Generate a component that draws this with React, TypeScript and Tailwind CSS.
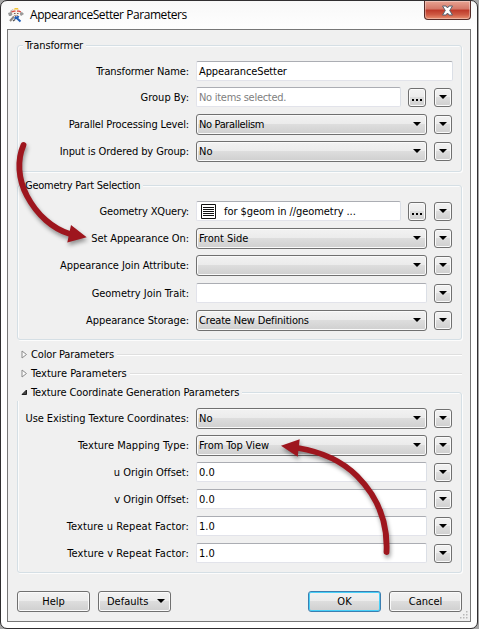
import { ReactNode } from "react";

const BEVEL =
  "border border-[#707070] rounded-[3px] bg-[linear-gradient(180deg,#f2f2f2_0%,#ebebeb_49%,#dddddd_50%,#cfcfcf_100%)] shadow-[inset_0_0_0_1px_#fafafa]";

function Arrow({ className = "" }: { className?: string }) {
  return (
    <svg width="8" height="4" viewBox="0 0 8 4" className={"block shrink-0 " + className}>
      <path d="M0 0H8L4 4Z" fill="#000" />
    </svg>
  );
}

function MenuButton() {
  return (
    <div className={"mt-px flex h-[19px] w-[18px] shrink-0 items-center justify-center " + BEVEL}>
      <Arrow className="-mt-px" />
    </div>
  );
}

type RowProps = {
  label: string;
  track: string;
  h: string;
  kind: "text" | "combo" | "picker" | "wide";
  children?: ReactNode;
};

function Row({ label, track, h, kind, children }: RowProps) {
  const width = kind === "wide" ? "w-[257px]" : kind === "picker" ? "w-[205px]" : "w-[231px]";
  const look =
    kind === "combo"
      ? "h-[21px] pr-[5px] " + BEVEL
      : "h-5 rounded-[2px] border border-[#e2e3ea] border-t-[#abadb3] border-r-[#dbdfe6] bg-white pt-[2px]";
  return (
    <div className={"flex items-start " + h}>
      <div className={"flex h-[21px] w-[171px] shrink-0 items-center justify-end " + track}>{label}</div>
      <div className={"ml-[7px] flex shrink-0 items-center justify-between pl-[2px] " + width + " " + look}>
        <div className="flex items-center">{children}</div>
        {kind === "combo" && <Arrow className="-mt-px" />}
      </div>
      {kind === "picker" && (
        <div className={"mt-px ml-[7px] flex h-[19px] w-[18px] shrink-0 items-end justify-center gap-[2px] pb-[5px] " + BEVEL}>
          <i className="size-[2px] bg-black" />
          <i className="size-[2px] bg-black" />
          <i className="size-[2px] bg-black" />
        </div>
      )}
      {kind !== "wide" && (
        <div className={kind === "picker" ? "ml-[8px]" : "ml-[7px]"}>
          <MenuButton />
        </div>
      )}
    </div>
  );
}

const GROUP =
  "rounded-[3px] border border-[#d5dfe5] shadow-[inset_1px_1px_0_#fcfcfc,1px_1px_0_#fcfcfc]";

function Group({ title, track, className, children }: { title: string; track: string; className: string; children: ReactNode }) {
  return (
    <section className={GROUP + " " + className}>
      <div className="-mt-[8px] ml-[5px] flex h-4 w-fit items-center bg-[#f0f0f0] pr-[3px] pl-[2px]">
        <span className={track}>{title}</span>
      </div>
      {children}
    </section>
  );
}

function Collapsed({ title, track }: { title: string; track: string }) {
  return (
    <div className="flex h-[19px] items-center pl-[4px]">
      <svg width="7" height="9" viewBox="0 0 7 9" className="mr-[3px] block shrink-0">
        <path d="M1 1L5.5 4.5L1 8Z" fill="#fbfbfb" stroke="#8b8b8b" />
      </svg>
      <span className={track}>{title}</span>
      <div className="ml-[3px] h-[2px] flex-1 border-b border-white bg-[#dfdfdf]" />
    </div>
  );
}

function FmeIcon() {
  return (
    <svg width="16" height="15" viewBox="0 0 16 15" className="block">
      <path d="M2 3L5 1V4L3 5Z" fill="#b9b4b0" />
      <path d="M0 5L3 4L5 6L3 8H1ZM11 5L14 4L16 6L13 8Z" fill="#9a9a9a" />
      <path d="M4 3L6 0H10L12 3V6L10 8H6L4 6Z" fill="#f6eee6" />
      <path d="M5.500 1.500L7 0H10L10.500 1.500Z" fill="#f2c534" />
      <path d="M3.500 4L6 3.200H7.500M9 3.200H11L13 4" fill="none" stroke="#d8433a" strokeWidth="1.2" />
      <path d="M6 5.500H7.500M9 5.500H10.500" stroke="#6b6260" strokeWidth="1" />
      <path d="M6 7.500H10" stroke="#c9a58c" strokeWidth="1" />
      <path d="M2 13L6 8.500" stroke="#8d8782" strokeWidth="2" />
      <path d="M7 8.500L12.500 13.500M8 9L7 11M10.500 8L9 10.500" fill="none" stroke="#245fb5" strokeWidth="2" />
      <path d="M5 13L7 11.500" stroke="#555" strokeWidth="1.5" />
    </svg>
  );
}

export default function App() {
  return (
    <div className="relative h-[629px] w-[479px] overflow-hidden bg-[#a5a5a5] font-['DejaVu_Sans_Condensed','DejaVu_Sans',sans-serif] text-[11px] leading-[14px] whitespace-nowrap text-black [font-stretch:condensed]">
      <div className="flex h-[629px] w-[478px] flex-col rounded-[7px] border border-[#302e30] bg-[linear-gradient(180deg,#f8f8f8,#ffffff_5%,#ffffff)] pr-[6px] pb-[6px] pl-[6px]">
        <header className="flex h-[28px] shrink-0 items-start justify-between">
          <div className="flex items-center gap-[6px] pt-[5px] pl-px">
            <FmeIcon />
            <h1 className="font-['Open_Sans',sans-serif] text-[12px] leading-[18px] tracking-[-0.44px] [font-stretch:normal]">AppearanceSetter Parameters</h1>
          </div>
          <div className="flex h-[19px] w-[47px] items-center justify-center rounded-b-[4px] border border-t-0 border-[#552b27] bg-[linear-gradient(180deg,#e8a493_0%,#d47767_45%,#bd3828_50%,#ce5943_75%,#e99071_100%)] shadow-[inset_0_0_0_1px_#ffffff55]">
            <svg width="13" height="11" viewBox="0 0 13 11">
              <path d="M1.500 1H5L6.500 3L8 1H11.500L8.700 5.500L11.500 10H8L6.500 8L5 10H1.500L4.300 5.500Z" fill="#fff" stroke="#56616f" />
            </svg>
          </div>
        </header>

        <main className="flex min-h-0 flex-1 flex-col border border-[#777] bg-[#f0f0f0] pt-[15px] pr-[8px] pl-[9px]">
          <Group title="Transformer" track="tracking-[-0.1px]" className="h-[127px]">
            <div className="pt-[7px]">
              <Row label="Transformer Name:" track="tracking-[-0.12px]" h="h-[26px]" kind="wide"><span className="tracking-[-0.12px]">AppearanceSetter</span></Row>
              <Row label="Group By:" track="" h="h-[27px]" kind="picker"><span className="tracking-[-0.28px] text-[#808080]">No items selected.</span></Row>
              <Row label="Parallel Processing Level:" track="tracking-[-0.16px]" h="h-[27px]" kind="combo"><span className="tracking-[-0.36px]">No Parallelism</span></Row>
              <Row label="Input is Ordered by Group:" track="tracking-[-0.1px]" h="h-[27px]" kind="combo">No</Row>
            </div>
          </Group>

          <Group title="Geometry Part Selection" track="tracking-[-0.24px]" className="mt-[13px] h-[155px]">
            <div className="pt-[7px]">
              <Row label="Geometry XQuery:" track="tracking-[-0.15px]" h="h-[27px]" kind="picker">
                <svg width="15" height="15" viewBox="0 0 15 15" className="-mt-[2px] mr-[8px] ml-[2px] block">
                  <path d="M.5 .5H14.5V14.5H.5Z" fill="#fff" stroke="#111" />
                  <path d="M2 3.5H13M2 5.5H13M2 7.5H13M2 9.5H13M2 11.5H13" stroke="#111" />
                </svg>
                <span className="tracking-[-0.07px]">for $geom in //geometry ...</span>
              </Row>
              <Row label="Set Appearance On:" track="tracking-[-0.09px]" h="h-[27px]" kind="combo"><span className="tracking-[-0.02px]">Front Side</span></Row>
              <Row label="Appearance Join Attribute:" track="tracking-[-0.07px]" h="h-[28px]" kind="combo" />
              <Row label="Geometry Join Trait:" track="tracking-[-0.04px]" h="h-[27px]" kind="text" />
              <Row label="Appearance Storage:" track="tracking-[-0.09px]" h="h-[27px]" kind="combo"><span className="tracking-[-0.18px]">Create New Definitions</span></Row>
            </div>
          </Group>

          <div className="pt-[5px]">
            <Collapsed title="Color Parameters" track="tracking-[-0.16px]" />
            <Collapsed title="Texture Parameters" track="" />
          </div>
          <section className={"mt-[9px] h-[181px] " + GROUP}>
            <div className="-mt-[8px] -ml-px flex h-4 w-fit items-center bg-[#f0f0f0] pr-[3px] pl-[4px]">
              <svg width="7" height="7" viewBox="0 0 7 7" className="-mt-px mr-[3px] block">
                <path d="M5.500 1V5.500H1Z" fill="#454545" stroke="#202020" />
              </svg>
              <span className="tracking-[-0.08px]">Texture Coordinate Generation Parameters</span>
            </div>
            <div className="pt-[7px]">
              <Row label="Use Existing Texture Coordinates:" track="tracking-[-0.07px]" h="h-[27px]" kind="combo">No</Row>
              <Row label="Texture Mapping Type:" track="tracking-[0.02px]" h="h-[27px]" kind="combo"><span className="tracking-[-0.04px]">From Top View</span></Row>
              <Row label="u Origin Offset:" track="tracking-[-0.03px]" h="h-[27px]" kind="text">0.0</Row>
              <Row label="v Origin Offset:" track="tracking-[-0.03px]" h="h-[27px]" kind="text">0.0</Row>
              <Row label="Texture u Repeat Factor:" track="tracking-[0.1px]" h="h-[27px]" kind="text">1.0</Row>
              <Row label="Texture v Repeat Factor:" track="tracking-[0.1px]" h="h-[27px]" kind="text">1.0</Row>
            </div>
          </section>

          <footer className="mt-[18px] flex gap-[8px]">
            <div className={"flex h-[21px] w-[73px] items-center justify-center " + BEVEL}>Help</div>
            <div className={"flex h-[21px] w-[73px] items-center justify-between pr-[5px] pl-[8px] " + BEVEL}>Defaults<Arrow className="-mt-px" /></div>
            <div className="ml-auto flex h-[21px] w-[73px] items-center justify-center rounded-[3px] border border-[#3c7fb1] bg-[linear-gradient(180deg,#f2f2f2_0%,#ebebeb_49%,#dddddd_50%,#cfcfcf_100%)] shadow-[inset_0_0_0_1px_#48d0f8]">OK</div>
            <div className={"flex h-[21px] w-[73px] items-center justify-center " + BEVEL}>Cancel</div>
          </footer>
          <svg width="8" height="8" viewBox="0 0 8 8" className="-mt-px -mr-[6px] block self-end" fill="#b8b8b8">
            <path d="M6 0h1.500v1.500h-1.500zM3 3h1.500v1.500h-1.500zM6 3h1.500v1.500h-1.500zM0 6h1.500v1.500h-1.500zM3 6h1.500v1.500h-1.500zM6 6h1.500v1.500h-1.500z" />
          </svg>
        </main>
      </div>

      <svg width="479" height="629" viewBox="0 0 479 629" className="pointer-events-none absolute inset-0 drop-shadow-[1px_3px_2px_rgba(0,0,0,0.4)]">
        <g fill="none" stroke="#9e161e" strokeWidth="5.8" strokeLinecap="round">
          <path d="M23.5 145C17 160 18 179 27 196C37 215 53 229 70 234" />
          <path d="M386.5 552C388 520 376 495 357 476C342 461 322 452 298 448" />
        </g>
        <path d="M71 225L86.700 237.300L67.300 242.500ZM281 445.700L299.700 439.300L297.700 456.700Z" fill="#9e161e" />
      </svg>
    </div>
  );
}
